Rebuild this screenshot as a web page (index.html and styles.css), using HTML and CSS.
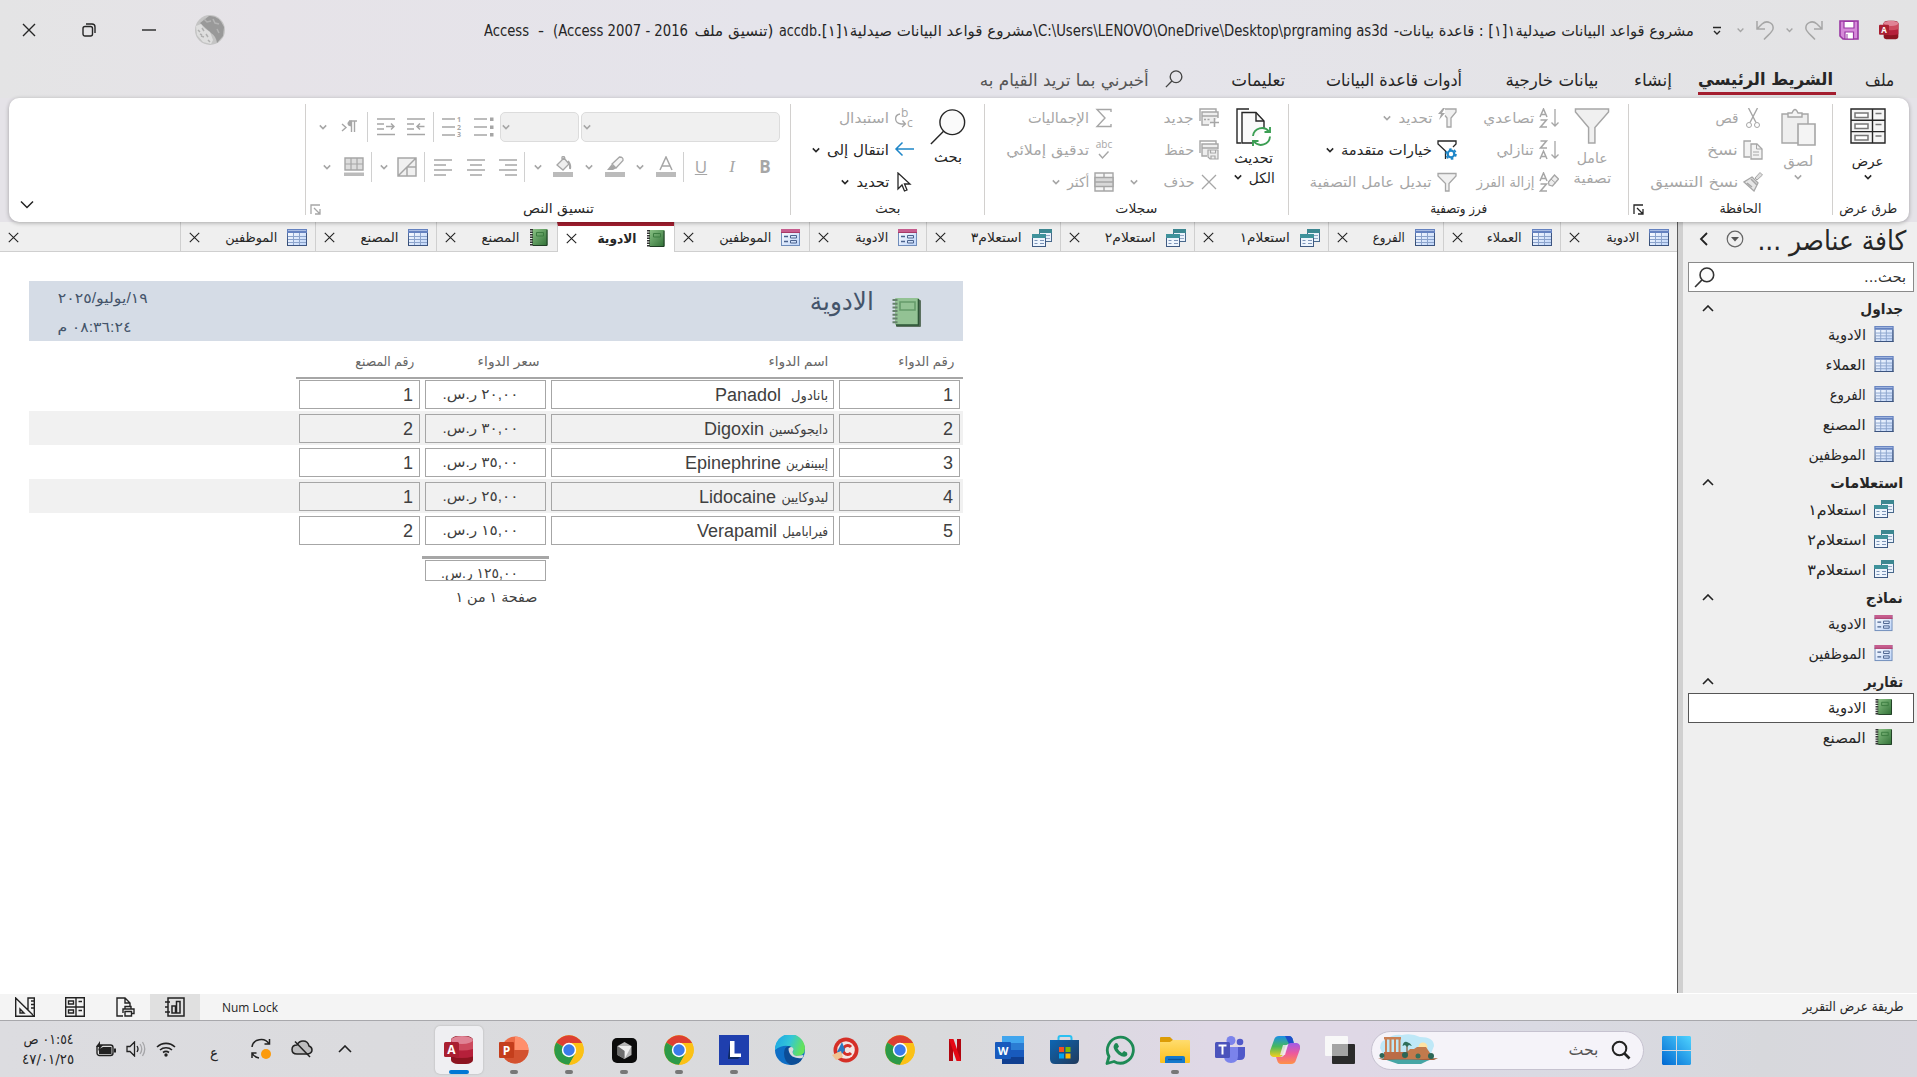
FILE: index.html
```html
<!DOCTYPE html>
<html lang="ar" dir="rtl">
<head>
<meta charset="utf-8">
<title>Access</title>
<link rel="stylesheet" href="styles.css">
</head>
<body>
<svg class="defs" width="0" height="0">
  <defs>
    <linearGradient id="gTable" x1="0" y1="0" x2="1" y2="1"><stop offset="0" stop-color="#fff"/><stop offset="1" stop-color="#bcd3f8"/></linearGradient>
    <linearGradient id="gFrame" x1="0" y1="0" x2="0" y2="1"><stop offset="0" stop-color="#5f7fc0"/><stop offset="1" stop-color="#2f4668"/></linearGradient>
    <linearGradient id="gBook" x1="0" y1="0" x2="1" y2="1"><stop offset="0" stop-color="#8cc487"/><stop offset="1" stop-color="#2f6f35"/></linearGradient>
    <linearGradient id="gWin" x1="0" y1="1" x2="1" y2="0"><stop offset="0" stop-color="#0067d1"/><stop offset="1" stop-color="#4fd3ff"/></linearGradient>
    <linearGradient id="gEdge" x1="0" y1="0" x2="1" y2="0.3"><stop offset="0" stop-color="#1ba3e6"/><stop offset=".55" stop-color="#33c6d8"/><stop offset="1" stop-color="#63e25c"/></linearGradient>
    <linearGradient id="gCopA" x1="0" y1="0" x2="0" y2="1"><stop offset="0" stop-color="#1b8fe8"/><stop offset=".5" stop-color="#48b85c"/><stop offset="1" stop-color="#f4cf1c"/></linearGradient>
    <linearGradient id="gCopB" x1="0" y1="0" x2="0" y2="1"><stop offset="0" stop-color="#a05be8"/><stop offset=".5" stop-color="#ee5a9b"/><stop offset="1" stop-color="#ff9146"/></linearGradient>
    <linearGradient id="gFolder" x1="0" y1="0" x2="0" y2="1"><stop offset="0" stop-color="#ffdc6e"/><stop offset="1" stop-color="#fcc01b"/></linearGradient>
    <linearGradient id="gStore" x1="0" y1="0" x2="1" y2="1"><stop offset="0" stop-color="#0c66b4"/><stop offset="1" stop-color="#213a5c"/></linearGradient>
  </defs>
  <symbol id="chev" viewBox="0 0 10 8"><path d="M1.8 2.4 5 5.6 8.2 2.4" fill="none" stroke="currentColor" stroke-width="1.5"/></symbol>
  <symbol id="x" viewBox="0 0 14 14"><path d="M1 1 13 13M13 1 1 13" fill="none" stroke="currentColor" stroke-width="1.4"/></symbol>
  <symbol id="launch" viewBox="0 0 11 11"><path d="M1 10V1H10M4 4l5.5 5.5M10 5v5H5" fill="none" stroke="currentColor" stroke-width="1.3"/></symbol>
  <symbol id="lens" viewBox="0 0 40 40"><circle cx="24.500" cy="15" r="13" fill="#fafafa" fill-opacity="var(--fo,1)" stroke="currentColor" stroke-width="var(--sw,1.500)"/><path d="M15.300 24.500 2 38" stroke="currentColor" stroke-width="var(--sw,1.500)"/></symbol>
  <symbol id="table" viewBox="0 0 20 17"><rect x=".5" y=".5" width="19" height="16" fill="url(#gTable)" stroke="url(#gFrame)"/><rect x="0" y="0" width="20" height="4" fill="#6582c0"/><path d="M1 1.500h18" stroke="#a9bce2"/><path d="M1 7.500h18M1 10.500h18M1 13.500h18M6.500 4v12M12.500 4v12" stroke="#8ba3cc" stroke-width="1"/><path d="M0 16.500h20M19.500 4v13" stroke="#3c5480"/></symbol>
  <symbol id="query" viewBox="0 0 20 18"><rect x="7.500" y=".5" width="12" height="12" fill="#eaf2fb" stroke="#49698c"/><path d="M7 0h13v4H7z" fill="#3c8791"/><path d="M9 6.500h9M9 9.500h9" stroke="#94a8c5"/><rect x=".5" y="5.500" width="13" height="12" fill="#eef5fd" stroke="#3f5a82"/><path d="M0 5h14v4H0z" fill="#3f929b"/><path d="M2.500 11.500h3M8 11.500h4M2.500 14.500h3M8 14.500h4" stroke="#7c94b8"/></symbol>
  <symbol id="form" viewBox="0 0 20 18"><rect x=".5" y=".5" width="18" height="16" fill="url(#gTable)" stroke="#6f8cba"/><path d="M0 0h19v4H0z" fill="#c65d8e"/><path d="M0 3.500h19" stroke="#a83a68"/><path d="M3 7.500h4M3 12.500h4" stroke="#4a628d" stroke-width="1.300"/><path d="M9.500 6.500h6v2.500h-6zM9.500 11.500h6v2.500h-6z" fill="none" stroke="#4a628d"/></symbol>
  <symbol id="book" viewBox="0 0 18 17"><rect x="2" y="0" width="15.500" height="16.500" fill="url(#gBook)"/><path d="M17 1v15.500H3" stroke="#1f3d24" fill="none"/><path d="M6.500 3.500h7v3.500h-7z" fill="none" stroke="#3c7c40"/><path d="M1.500 0v17" stroke="#333" stroke-width="3" stroke-dasharray="1.500 1"/></symbol>
  <symbol id="funnel" viewBox="0 0 20 20"><path d="M1 1.500h18V4l-7 7.500V19H8.500v-7.500L1 4z" fill="#f0f0f0" stroke="currentColor" stroke-width="1.300"/></symbol>
  <symbol id="access" viewBox="0 0 30 30"><rect x="7" y="1" width="22" height="28" rx="7" ry="4" fill="#8c1420"/><path d="M7 5h22v16.500q-11 3-22 0z" fill="#b5203a"/><path d="M7 5h22v9q-11 3-22 0z" fill="#cd4a5e"/><ellipse cx="18" cy="5" rx="11" ry="4" fill="#e08395"/><rect x="0" y="7" width="15" height="15" rx="1.500" fill="#a91f30"/><text x="7.500" y="19" text-anchor="middle" font-family="Open Sans" font-weight="700" font-size="12" fill="#fff">A</text></symbol>
  <symbol id="chrome" viewBox="-15 -15 30 30"><circle r="14.800" fill="#fbc116"/><path d="M0 0-12.800-7.400A14.800 14.800 0 0 1 12.800-7.400L13-7H0z" fill="#dd3f32"/><path d="M0 0-12.800-7.400A14.800 14.800 0 0 0 0 14.800L6.500 3.500z" fill="#2c9a48"/><path d="M0 0 6.500 3.500 0 14.800A14.800 14.800 0 0 0 13-7H0z" fill="#fbc116"/><circle r="7.200" fill="#fff"/><circle r="5.700" fill="#3a7bea"/></symbol>
</svg>

<header class="titlebar">
  <svg class="app" width="20" height="20"><use href="#access"/></svg>
  <svg class="save" width="20" height="20" viewBox="0 0 20 20"><path d="M1 1h18v18H4l-3-3z" fill="#d58ad9" stroke="#9a37a3" stroke-width="1.600"/><path d="M5 1.500h10V8H5zM6 12h8.500v7H6z" fill="#fff" stroke="#9a37a3" stroke-width="1.200"/><path d="M8 14v5" stroke="#9a37a3"/></svg>
  <svg class="redo dim" width="20" height="20" viewBox="0 0 20 20"><path d="M18 1v8h-8M18 9 13 4C8-.5 1 3 2 9c.5 3 5 6 9 10.500" fill="none" stroke="currentColor" stroke-width="1.500"/></svg>
  <svg class="c1 dim" width="9" height="8"><use href="#chev"/></svg>
  <svg class="undo dim" width="20" height="20" viewBox="0 0 20 20"><path d="M2 1v8h8M2 9 7 4C12-.5 19 3 18 9c-.5 3-5 6-9 10.500" fill="none" stroke="currentColor" stroke-width="1.500"/></svg>
  <svg class="c2 dim" width="9" height="8"><use href="#chev"/></svg>
  <svg class="c3" width="10" height="10" viewBox="0 0 10 10"><path d="M1 1.500h8M2 5l3 3 3-3" fill="none" stroke="currentColor" stroke-width="1.400"/></svg>
  <div class="title">
    <span class="t" data-w="300">مشروع قواعد البيانات صيدلية١[١] : قاعدة بيانات-</span>
    <span class="t gap6" dir="ltr" data-w="350">C:\Users\LENOVO\OneDrive\Desktop\prgraming as3d</span>
    <span class="t" data-w="221">\مشروع قواعد البيانات صيدلية١[١].</span>
    <span class="t" dir="ltr" data-w="38">accdb</span>
    <span class="t gap6" data-w="79">(تنسيق ملف</span>
    <span class="t gap6" dir="ltr" data-w="135">(Access 2007 - 2016</span>
    <span class="t gap9" data-w="6">-</span>
    <span class="t gap9" dir="ltr" data-w="45">Access</span>
  </div>
  <div class="window">
    <svg width="30" height="30" viewBox="0 0 30 30"><circle cx="15" cy="15" r="15" fill="#c4c4c4"/><path d="M5 8 14 1q10-1 15 11l-1 9-6 7q-1-7-6-10z" fill="#999"/><path d="m1 11 5-2 3 4 6 4 3 8-2 4-8-2-6-7z" fill="#dedede"/><path d="m3 15 2 2m2-4 2 3m-3 5 3 1m2-3 2 3m0 3 2 2M5 19l2 1" stroke="#b0b0b0" stroke-width="1.500"/><path d="m9 4 3 3 4-1M18 4l2 4 4 1M22 14l2 4" stroke="#b4b4b4" fill="none" stroke-width="1.500"/></svg>
    <svg width="14" height="14" viewBox="0 0 14 14"><path d="M0 7h14" stroke="currentColor" stroke-width="1.400"/></svg>
    <svg width="14" height="14" viewBox="0 0 14 14"><rect x="1" y="3.500" width="9.500" height="9.500" rx="2" fill="none" stroke="currentColor" stroke-width="1.400"/><path d="M4 1h6q3 0 3 3v6" fill="none" stroke="currentColor" stroke-width="1.400"/></svg>
    <svg width="14" height="14"><use href="#x"/></svg>
  </div>
</header>

<nav class="menu">
  <span class="t" data-w="29">ملف</span>
  <span class="on"><span class="t" data-w="135">الشريط الرئيسي</span></span>
  <span class="t" data-w="38">إنشاء</span>
  <span class="t m36" data-w="93">بيانات خارجية</span>
  <span class="t m43" data-w="136">أدوات قاعدة البيانات</span>
  <span class="t m41" data-w="54">تعليمات</span>
  <svg class="tell" width="18" height="20"><use href="#lens"/></svg>
  <span class="t say" data-w="169">أخبرني بما تريد القيام به</span>
</nav>

<section class="ribbon">
  <div class="group g1">
    <div class="body">
      <div class="big">
        <svg width="36" height="36" viewBox="0 0 36 36"><path d="M1 1h34v34H1zM1 12.300h34M1 23.600h34M22.500 1v34" fill="#f5f5f5" stroke="currentColor" stroke-width="1.400"/><path d="M5 5h13v4.500H5zM5 16h13v4.500H5zM5 27.500h13v4.500H5z" fill="#fff" stroke="#777" stroke-width="1.500"/><path d="M25.500 5.500h6M25.500 16.500h6M25.500 28h6" stroke="#777" stroke-width="1.500"/></svg>
        <span class="t" data-w="32">عرض</span><svg class="below" width="10" height="8"><use href="#chev"/></svg>
      </div>
    </div>
    <footer><span class="t" data-w="58">طرق عرض</span></footer>
  </div>
  <div class="group g2">
    <div class="body">
      <div class="big dim">
        <svg width="36" height="38" viewBox="0 0 36 38"><path d="M2 6h26v29H2z" fill="#eee" stroke="currentColor" stroke-width="1.400"/><path d="M8 9V5h4q3-7 6 0h4v4z" fill="#f4f4f4" stroke="currentColor" stroke-width="1.400"/><path d="M18 16h17v21H18z" fill="#f4f4f4" stroke="currentColor" stroke-width="1.600"/></svg>
        <span class="t" data-w="30">لصق</span><svg class="below" width="10" height="8"><use href="#chev"/></svg>
      </div>
      <div class="col dim">
        <div class="cmd"><svg width="20" height="20" viewBox="0 0 20 20"><path d="M5.500 0 13 14.500M14.500 0 7 14.500" fill="none" stroke="currentColor" stroke-width="1.400"/><circle cx="6" cy="17" r="2.500" fill="none" stroke="currentColor"/><circle cx="14" cy="17" r="2.500" fill="none" stroke="currentColor"/></svg><span class="t" data-w="23">قص</span></div>
        <div class="cmd"><svg width="20" height="20" viewBox="0 0 20 20"><path d="M7 17H1V1h7M8 4h6l5 5v10H8z" fill="#f2f2f2" stroke="currentColor" stroke-width="1.300"/><path d="M13.500 4v5H19M10 12h6M10 15h6" fill="none" stroke="currentColor"/></svg><span class="t" data-w="31">نسخ</span></div>
        <div class="cmd"><svg width="20" height="20" viewBox="0 0 20 20"><path d="m12 6 5-5.500 2.500 2.500L14 8z" fill="#ddd" stroke="currentColor"/><path d="m9 5 6 6-4 8L1 10z" fill="#e6e6e6" stroke="currentColor" stroke-width="1.300"/><path d="m8 7 6 6M4 11l5 4" stroke="currentColor" stroke-width="1.600"/></svg><span class="t" data-w="88">نسخ التنسيق</span></div>
      </div>
    </div>
    <footer><span class="t" data-w="42">الحافظة</span><svg class="lau" width="11" height="11"><use href="#launch"/></svg></footer>
  </div>
  <div class="group g3">
    <div class="body">
      <div class="big dim two">
        <svg width="36" height="37" viewBox="0 0 36 37"><path d="M1 1h34v3L21 20v16h-6.500V20L1 4z" fill="#f0f0f0" stroke="currentColor" stroke-width="1.500"/></svg>
        <span class="t" data-w="31">عامل</span><span class="t" data-w="38">تصفية</span>
      </div>
      <div class="col sort dim">
        <div class="cmd"><svg width="20" height="20" viewBox="0 0 20 20"><path d="M16 1v17M12.500 14.500 16 18l3.500-3.500" fill="none" stroke="currentColor" stroke-width="1.300"/><path d="M1 9 4.500 1 8 9M2.500 6.500h4M1.500 12h6l-6 7h6.500" fill="none" stroke="currentColor" stroke-width="1.500"/></svg><span class="t" data-w="51">تصاعدي</span></div>
        <div class="cmd"><svg width="20" height="20" viewBox="0 0 20 20"><path d="M16 1v17M12.500 14.500 16 18l3.500-3.500" fill="none" stroke="currentColor" stroke-width="1.300"/><path d="M1 19 4.500 11 8 19M2.500 16.500h4M1.500 1h6l-6 7h6.500" fill="none" stroke="currentColor" stroke-width="1.500"/></svg><span class="t" data-w="37">تنازلي</span></div>
        <div class="cmd"><svg width="20" height="20" viewBox="0 0 20 20"><path d="M1 9 4.500 1 8 9M2.500 6.500h4M1.500 12h6l-6 7h6.500" fill="none" stroke="currentColor" stroke-width="1.500"/><path d="m9.500 10 6-7 4 4-6 7-3.500-1z" fill="#eee" stroke="currentColor" stroke-width="1.300"/><path d="m12 7 4.500 4" stroke="currentColor"/></svg><span class="t" data-w="58">إزالة الفرز</span></div>
      </div>
      <div class="col">
        <div class="cmd dim"><svg width="20" height="20" viewBox="0 0 20 20"><path d="M8 1h11v3l-5 6v9h-4v-9L8 7.500" fill="#f0f0f0" stroke="currentColor" stroke-width="1.300"/><path d="M6 0 1 6h3l-2 6 6-7H5l3-5z" fill="currentColor"/></svg><span class="t" data-w="34">تحديد</span><svg class="c" width="10" height="8"><use href="#chev"/></svg></div>
        <div class="cmd"><svg width="20" height="20" viewBox="0 0 20 20"><path d="M8.500 19v-8L1 4V1h18v3l-3 3" fill="none" stroke="currentColor" stroke-width="1.300"/><circle cx="14" cy="14" r="3.300" fill="none" stroke="#1e86c8" stroke-width="2.200"/><circle cx="14" cy="14" r="4.900" fill="none" stroke="#1e86c8" stroke-width="1.800" stroke-dasharray="2.560 2.560"/></svg><span class="t" data-w="91">خيارات متقدمة</span><svg class="c" width="10" height="8"><use href="#chev"/></svg></div>
        <div class="cmd dim"><svg width="20" height="20"><use href="#funnel"/></svg><span class="t" data-w="122">تبديل عامل التصفية</span></div>
      </div>
    </div>
    <footer><span class="t" data-w="57">فرز وتصفية</span></footer>
  </div>
  <div class="group g4">
    <div class="body">
      <div class="big two">
        <svg width="36" height="38" viewBox="0 0 36 38"><path d="M5 35H1V1h12" fill="none" stroke="currentColor" stroke-width="1.400"/><path d="M17 35H6V4.500h14l8 8.500v7" fill="#fafafa" stroke="currentColor" stroke-width="1.400"/><path d="M20 4.500V13h8" fill="none" stroke="currentColor" stroke-width="1.400"/><path d="M17 28a9 9 0 0 1 16-4.500M34 28.500a9 9 0 0 1-16 5" fill="none" stroke="#3c9f54" stroke-width="1.900"/><path d="M34 19v5h-5.500M17 38v-5h5.500" fill="none" stroke="#3c9f54" stroke-width="1.900"/></svg>
        <span class="t" data-w="39">تحديث</span><span class="pair"><span class="t" data-w="26">الكل</span><svg class="c" width="10" height="8"><use href="#chev"/></svg></span>
      </div>
      <div class="col rec dim">
        <div class="cmd"><svg width="20" height="20" viewBox="0 0 20 20"><path d="M1 13V1h16v3" fill="none" stroke="currentColor" stroke-width="1.400"/><path d="M10 17H3V4h16v6M3 8h16" fill="#eee" stroke="currentColor" stroke-width="1.400"/><path d="M5 11.500h2M8.500 11.500h2M15.500 10v9M11 14.500h9" stroke="currentColor" stroke-width="1.600"/></svg><span class="t" data-w="30">جديد</span></div>
        <div class="cmd"><svg width="20" height="20" viewBox="0 0 20 20"><path d="M1 13V1h16v3" fill="none" stroke="currentColor" stroke-width="1.400"/><path d="M8 16H3V4h16v5M3 8h16" fill="#eee" stroke="currentColor" stroke-width="1.400"/><path d="M9 10h10v9h-8l-2-2zM11.500 10v3h5v-3M12 19v-3h4v3" fill="#eee" stroke="currentColor" stroke-width="1.200"/></svg><span class="t" data-w="30">حفظ</span></div>
        <div class="cmd"><svg width="20" height="20" viewBox="0 0 20 20"><path d="m3 3 14 14M17 3 3 17" stroke="currentColor" stroke-width="1.300"/></svg><span class="t" data-w="31">حذف</span><svg class="far" width="10" height="8"><use href="#chev"/></svg></div>
      </div>
      <div class="col dim">
        <div class="cmd"><svg width="20" height="20" viewBox="0 0 20 20"><path d="M17 4V1.500H3L11 10l-8 8.500h14V16" fill="none" stroke="currentColor" stroke-width="1.400"/></svg><span class="t" data-w="61">الإجماليات</span></div>
        <div class="cmd"><svg width="20" height="20" viewBox="0 0 20 20"><text x="10" y="8" text-anchor="middle" font-family="Open Sans" font-size="10" fill="currentColor">abc</text><path d="m5 14 3.500 4 6-6.500" fill="none" stroke="currentColor" stroke-width="1.400"/></svg><span class="t" data-w="83">تدقيق إملائي</span></div>
        <div class="cmd"><svg width="20" height="20" viewBox="0 0 20 20"><path d="M1 1h18v18H1z" fill="#f6f6f6" stroke="currentColor" stroke-width="1.400"/><path d="M1 5.500h18v9H1z" fill="#d8d8d8" stroke="currentColor" stroke-width="1.400"/><path d="M1 10h18M10 1v4.500M10 14.500V19" stroke="currentColor" stroke-width="1.400"/></svg><span class="t" data-w="22">أكثر</span><svg class="c" width="10" height="8"><use href="#chev"/></svg></div>
      </div>
    </div>
    <footer><span class="t" data-w="42">سجلات</span></footer>
  </div>
  <div class="group g5">
    <div class="body">
      <div class="big">
        <svg width="38" height="38"><use href="#lens"/></svg>
        <span class="t" data-w="28">بحث</span>
      </div>
      <div class="col">
        <div class="cmd dim"><svg width="20" height="20" viewBox="0 0 20 20"><text x="7" y="9" font-family="Open Sans" font-size="12" fill="currentColor">b</text><text x="13" y="19" font-family="Open Sans" font-size="12" fill="currentColor">c</text><path d="M6 6c-6 1-6 9 1 10h4M8.500 12.500 11.500 16 8 19" fill="none" stroke="currentColor" stroke-width="1.300"/></svg><span class="t" data-w="50">استبدال</span></div>
        <div class="cmd"><svg width="20" height="20" viewBox="0 0 20 20"><path d="M20 9H2M8.500 2.500 2 9l6.500 6.500" fill="none" stroke="#1e86c8" stroke-width="1.500"/></svg><span class="t" data-w="62">انتقال إلى</span><svg class="c" width="10" height="8"><use href="#chev"/></svg></div>
        <div class="cmd"><svg width="20" height="20" viewBox="0 0 20 20"><path d="M4 1v16l4-4 2.500 6 2.500-1-2.500-6H16z" fill="#fff" stroke="currentColor" stroke-width="1.300"/></svg><span class="t" data-w="33">تحديد</span><svg class="c" width="10" height="8"><use href="#chev"/></svg></div>
      </div>
    </div>
    <footer><span class="t" data-w="25">بحث</span></footer>
  </div>
  <div class="group g6">
    <div class="body dim">
      <div class="line one">
        <span class="combo"><svg width="10" height="8"><use href="#chev"/></svg></span>
        <span class="combo"><svg width="10" height="8"><use href="#chev"/></svg></span>
        <svg width="20" height="20" viewBox="0 0 20 20"><path d="M0 2h13M0 10h13M0 18h13" stroke="currentColor" stroke-width="1.600"/><path d="M16 .5h3.500V4H16zM16 8.500h3.500V12H16zM16 16h3.500v3.500H16z" fill="currentColor"/></svg>
        <svg width="20" height="20" viewBox="0 0 20 20"><path d="M0 2h13M0 10h13M0 18h13" stroke="currentColor" stroke-width="1.600"/><g font-family="Open Sans" font-weight="700" font-size="7" fill="currentColor"><text x="15" y="5">1</text><text x="15" y="12.500">2</text><text x="15" y="20">3</text></g></svg>
        <i class="sep"></i>
        <svg width="18" height="20" viewBox="0 0 18 20"><path d="M0 2h18M0 7h7M0 12h7M0 17.500h18M17.500 9.500H10M13 6.500l-3 3 3 3" fill="none" stroke="currentColor" stroke-width="1.500"/></svg>
        <svg width="18" height="20" viewBox="0 0 18 20"><path d="M0 2h18M0 7h7M0 12h7M0 17.500h18M9 9.500h8M14 6.500l3 3-3 3" fill="none" stroke="currentColor" stroke-width="1.500"/></svg>
        <i class="sep"></i>
        <svg width="16" height="14" viewBox="0 0 16 14"><path d="m1 4 4 3.500L1 11M10.500 1v11M13.500 1v11M8 1h8" fill="none" stroke="currentColor" stroke-width="1.400"/><path d="M11 .5v6Q6.500 6.500 6.500 3.500T11 .5z" fill="currentColor"/></svg>
        <svg width="10" height="8"><use href="#chev"/></svg>
      </div>
      <div class="line two">
        <b class="let">B</b><em class="let">I</em><u class="let">U</u><i class="sep"></i>
        <svg width="20" height="22" viewBox="0 0 20 22"><path d="M4 14 10 1l6 13M6 10h8" fill="none" stroke="currentColor" stroke-width="1.500"/><path d="M0 16h20v5H0z" fill="#bbb"/></svg>
        <svg width="10" height="8"><use href="#chev"/></svg>
        <svg width="20" height="22" viewBox="0 0 20 22"><path d="m7 8 7.500-7q4 0 3.500 3.500L11 12z" fill="#f6f6f6" stroke="currentColor" stroke-width="1.300"/><path d="m6.500 8.500-4.500 5.500h6l3.500-2z" fill="currentColor"/><path d="M0 16h20v5H0z" fill="#bbb"/></svg>
        <svg width="10" height="8"><use href="#chev"/></svg>
        <svg width="20" height="22" viewBox="0 0 20 22"><path d="m4 9 7-7 5 6-6 6zM9 5V1q3-2 3 3" fill="#eee" stroke="currentColor" stroke-width="1.300"/><path d="M15 5q3 4 2 8" fill="none" stroke="currentColor" stroke-width="2"/><path d="M0 16h20v5H0z" fill="#bbb"/></svg>
        <svg width="10" height="8"><use href="#chev"/></svg>
        <i class="sep"></i>
        <svg width="18" height="18" viewBox="0 0 18 18"><path d="M0 2h18M6 7h12M0 12h18M6 17h12" stroke="currentColor" stroke-width="1.500"/></svg>
        <svg width="18" height="18" viewBox="0 0 18 18"><path d="M0 2h18M3 7h12M0 12h18M3 17h12" stroke="currentColor" stroke-width="1.500"/></svg>
        <svg width="18" height="18" viewBox="0 0 18 18"><path d="M0 2h18M0 7h12M0 12h18M0 17h12" stroke="currentColor" stroke-width="1.500"/></svg>
        <i class="sep"></i>
        <svg width="20" height="20" viewBox="0 0 20 20"><path d="M1 1h18v18H1zM1 19 19 1M10 10v9M10 10h9" fill="#f0f0f0" stroke="currentColor" stroke-width="1.500"/></svg>
        <svg width="10" height="8"><use href="#chev"/></svg>
        <i class="sep"></i>
        <svg width="20" height="20" viewBox="0 0 20 20"><path d="M1 1h18v12H1z" fill="#ddd" stroke="currentColor" stroke-width="1.400"/><path d="M1 7h18M7 1v12M13 1v12" stroke="currentColor" stroke-width="1.200"/><path d="M0 15.500h20V19H0z" fill="#bbb"/></svg>
        <svg width="10" height="8"><use href="#chev"/></svg>
      </div>
    </div>
    <footer><span class="t" data-w="71">تنسيق النص</span><svg class="lau dim" width="11" height="11"><use href="#launch"/></svg></footer>
  </div>
  <svg class="collapse" width="14" height="9" viewBox="0 0 14 9"><path d="m1 1.500 6 6 6-6" fill="none" stroke="currentColor" stroke-width="1.500"/></svg>
</section>

<main class="work">
  <section class="docs">
    <div class="tabs">
      <div class="tab w117"><svg width="20" height="17"><use href="#table"/></svg><span class="t" data-w="33">الادوية</span><svg class="x" width="11" height="11"><use href="#x"/></svg></div>
      <div class="tab w117"><svg width="20" height="17"><use href="#table"/></svg><span class="t" data-w="35">العملاء</span><svg class="x" width="11" height="11"><use href="#x"/></svg></div>
      <div class="tab w115"><svg width="20" height="17"><use href="#table"/></svg><span class="t" data-w="32">الفروع</span><svg class="x" width="11" height="11"><use href="#x"/></svg></div>
      <div class="tab w134"><svg width="20" height="18"><use href="#query"/></svg><span class="t" data-w="50">استعلام١</span><svg class="x" width="11" height="11"><use href="#x"/></svg></div>
      <div class="tab w134"><svg width="20" height="18"><use href="#query"/></svg><span class="t" data-w="51">استعلام٢</span><svg class="x" width="11" height="11"><use href="#x"/></svg></div>
      <div class="tab w134"><svg width="20" height="18"><use href="#query"/></svg><span class="t" data-w="51">استعلام٣</span><svg class="x" width="11" height="11"><use href="#x"/></svg></div>
      <div class="tab w117"><svg width="20" height="18"><use href="#form"/></svg><span class="t" data-w="33">الادوية</span><svg class="x" width="11" height="11"><use href="#x"/></svg></div>
      <div class="tab w135"><svg width="20" height="18"><use href="#form"/></svg><span class="t" data-w="52">الموظفين</span><svg class="x" width="11" height="11"><use href="#x"/></svg></div>
      <div class="tab w117 active"><svg width="20" height="17"><use href="#book"/></svg><span class="t" data-w="39">الادوية</span><svg class="x" width="11" height="11"><use href="#x"/></svg></div>
      <div class="tab w121"><svg width="20" height="17"><use href="#book"/></svg><span class="t" data-w="38">المصنع</span><svg class="x" width="11" height="11"><use href="#x"/></svg></div>
      <div class="tab w121"><svg width="20" height="17"><use href="#table"/></svg><span class="t" data-w="38">المصنع</span><svg class="x" width="11" height="11"><use href="#x"/></svg></div>
      <div class="tab w135"><svg width="20" height="17"><use href="#table"/></svg><span class="t" data-w="52">الموظفين</span><svg class="x" width="11" height="11"><use href="#x"/></svg></div>
      <div class="tab rest"><svg class="x" width="11" height="11"><use href="#x"/></svg></div>
    </div>
    <article class="report">
      <header class="band">
        <svg width="30" height="30" viewBox="0 0 30 30"><rect x="4" y="3" width="25" height="27" rx="1" fill="#5c7160"/><rect x="3" y="1" width="24" height="27" rx="1" fill="#93c294"/><path d="M26.500 2v26H4" fill="none" stroke="#2d5536" stroke-width="1.600"/><path d="M8 5h15v8H8z" fill="none" stroke="#659b69" stroke-width="1.600"/><path d="M3 2v26" stroke="#66806c" stroke-width="5" stroke-dasharray="2 1.700"/></svg>
        <h1><span class="t" data-w="64">الادوية</span></h1>
        <div class="stamp">
          <span class="t" data-w="90">١٩/يوليو/٢٠٢٥</span>
          <span class="t" data-w="74">٠٨:٣٦:٢٤ م</span>
        </div>
      </header>
      <div class="row head">
        <span><span class="t" data-w="56">رقم الدواء</span></span><span><span class="t" data-w="60">اسم الدواء</span></span><span><span class="t" data-w="62">سعر الدواء</span></span><span><span class="t" data-w="59">رقم المصنع</span></span>
      </div>
      <div class="rule"></div>
      <div class="row data"><span>1</span><span class="name"><span class="t" data-w="37">بانادول</span><bdi class="wide">Panadol</bdi></span><span class="cash"><span class="t" data-w="76">٢٠,٠٠ ر.س.</span></span><span>1</span></div>
      <div class="row data alt"><span>2</span><span class="name"><span class="t" data-w="59">دايجوكسين</span><bdi>Digoxin</bdi></span><span class="cash"><span class="t" data-w="76">٣٠,٠٠ ر.س.</span></span><span>2</span></div>
      <div class="row data"><span>3</span><span class="name"><span class="t" data-w="42">إيبينفرين</span><bdi>Epinephrine</bdi></span><span class="cash"><span class="t" data-w="76">٣٥,٠٠ ر.س.</span></span><span>1</span></div>
      <div class="row data alt"><span>4</span><span class="name"><span class="t" data-w="47">ليدوكايين</span><bdi>Lidocaine</bdi></span><span class="cash"><span class="t" data-w="76">٢٥,٠٠ ر.س.</span></span><span>1</span></div>
      <div class="row data"><span>5</span><span class="name"><span class="t" data-w="46">فيراباميل</span><bdi>Verapamil</bdi></span><span class="cash"><span class="t" data-w="76">١٥,٠٠ ر.س.</span></span><span>2</span></div>
      <div class="sum"><div class="total cash"><span class="t" data-w="77">١٢٥,٠٠ ر.س.</span></div><div class="page"><span class="t" data-w="82">صفحة ١ من ١</span></div></div>
    </article>
  </section>
  <aside class="nav">
    <div class="top"><span class="t" data-w="149">كافة عناصر ...</span>
      <svg class="circ" width="18" height="18" viewBox="0 0 18 18"><circle cx="9" cy="9" r="7.800" fill="none" stroke="#666" stroke-width="1.200"/><path d="M5 7h8l-4 4.500z" fill="#555"/></svg>
      <svg class="fold" width="9" height="14" viewBox="0 0 9 14"><path d="M8 1 2 7l6 6" fill="none" stroke="#222" stroke-width="1.800"/></svg>
    </div>
    <div class="find"><span class="t" data-w="42">بحث...</span><svg width="21" height="21"><use href="#lens"/></svg></div>
    <div class="cat first"><span class="t" data-w="43">جداول</span><svg width="12" height="7" viewBox="0 0 12 7"><path d="m1 6 5-5 5 5" fill="none" stroke="#222" stroke-width="1.600"/></svg></div>
    <div class="obj"><svg width="20" height="16"><use href="#table"/></svg><span class="t" data-w="38">الادوية</span></div>
    <div class="obj"><svg width="20" height="16"><use href="#table"/></svg><span class="t" data-w="40">العملاء</span></div>
    <div class="obj"><svg width="20" height="16"><use href="#table"/></svg><span class="t" data-w="36">الفروع</span></div>
    <div class="obj"><svg width="20" height="16"><use href="#table"/></svg><span class="t" data-w="43">المصنع</span></div>
    <div class="obj"><svg width="20" height="16"><use href="#table"/></svg><span class="t" data-w="57">الموظفين</span></div>
    <div class="cat second"><span class="t" data-w="73">استعلامات</span><svg width="12" height="7" viewBox="0 0 12 7"><path d="m1 6 5-5 5 5" fill="none" stroke="#222" stroke-width="1.600"/></svg></div>
    <div class="obj"><svg width="20" height="18"><use href="#query"/></svg><span class="t" data-w="58">استعلام١</span></div>
    <div class="obj"><svg width="20" height="18"><use href="#query"/></svg><span class="t" data-w="59">استعلام٢</span></div>
    <div class="obj"><svg width="20" height="18"><use href="#query"/></svg><span class="t" data-w="59">استعلام٣</span></div>
    <div class="cat"><span class="t" data-w="37">نماذج</span><svg width="12" height="7" viewBox="0 0 12 7"><path d="m1 6 5-5 5 5" fill="none" stroke="#222" stroke-width="1.600"/></svg></div>
    <div class="obj"><svg width="20" height="17"><use href="#form"/></svg><span class="t" data-w="38">الادوية</span></div>
    <div class="obj"><svg width="20" height="17"><use href="#form"/></svg><span class="t" data-w="57">الموظفين</span></div>
    <div class="cat"><span class="t" data-w="39">تقارير</span><svg width="12" height="7" viewBox="0 0 12 7"><path d="m1 6 5-5 5 5" fill="none" stroke="#222" stroke-width="1.600"/></svg></div>
    <div class="obj sel"><svg width="20" height="16"><use href="#book"/></svg><span class="t" data-w="38">الادوية</span></div>
    <div class="obj"><svg width="20" height="16"><use href="#book"/></svg><span class="t" data-w="43">المصنع</span></div>
  </aside>
</main>

<footer class="status">
  <span class="t" data-w="101">طريقة عرض التقرير</span>
  <span class="t num" dir="ltr" data-w="56">Num Lock</span>
  <span class="view on"><svg width="20" height="20" viewBox="0 0 20 20"><path d="M3 1h16v18H3zM0 5h5M0 10h3M0 15h5M7 9h3.500v7H7zM11.500 4.500H15V16h-3.500z" fill="none" stroke="currentColor" stroke-width="1.500"/></svg></span>
  <span class="view"><svg width="20" height="20" viewBox="0 0 20 20"><path d="M8 19H2V1h8l5 5v3M10 1v5h5" fill="none" stroke="currentColor" stroke-width="1.400"/><path d="M10 12V9.500h6V12M8 16v-4h11v4.500h-2M10 14.500h6.500V19H10z" fill="none" stroke="currentColor" stroke-width="1.400"/></svg></span>
  <span class="view"><svg width="20" height="20" viewBox="0 0 20 20"><path d="M.7.700h18.600v18.600H.7zM.7 10h18.600M11 .7v18.600M3.500 4h5v3h-5zM3.500 13h5v3h-5zM13.500 4.500h3.500M13.500 13.500h3.500" fill="none" stroke="currentColor" stroke-width="1.400"/></svg></span>
  <span class="view"><svg width="20" height="20" viewBox="0 0 20 20"><path d="M.7 1v18.300h18.600zM5 12v4h4zM13 13V1h6.300v18M16 4h3M16 7.500h3M16 11h3" fill="none" stroke="currentColor" stroke-width="1.400"/></svg></span>
</footer>

<footer class="taskbar">
  <svg class="start" width="29" height="29" viewBox="0 0 29 29"><path d="M1 0h13v14H0V1zM15 0h13l1 1v13H15zM0 15h14v14H1l-1-1zM15 15h14v13l-1 1H15z" fill="url(#gWin)"/></svg>
  <div class="pill">
    <svg width="20" height="20" viewBox="0 0 20 20"><circle cx="8.500" cy="8.500" r="6.800" fill="none" stroke="#222" stroke-width="2"/><path d="m13.500 13.500 5 5" stroke="#222" stroke-width="2.600"/></svg>
    <span class="t" data-w="30">بحث</span>
    <svg class="pic" width="60" height="32" viewBox="0 0 60 32"><path d="M2 14q0-8 8-9 4-5 14-4 10-2 18 2 14 0 14 9l-4 10H6z" fill="#bfe8f7"/><circle cx="45" cy="13" r="4.500" fill="#ffe3a3"/><path d="M3 24h54l-8 3-6 3H20z" fill="#46a5a4"/><path d="M6 18h25v7H6z" fill="#bb6c46"/><path d="M28 19l4-4h4l3-2h9l4 6v6H28z" fill="#c27a4c"/><path d="M6 3h17v2.500H6zM7 5h2v13H7zM11.500 5h2v13h-2zM16 5h2v13h-2zM20.500 5h2v13h-2z" fill="#c98053"/><path d="M0 24q20 3 60 0l-4 2H5z" fill="#a55f3c"/><path d="M29 11v9" stroke="#7a5632" stroke-width="1.200"/><path d="M24.500 12q1-5 4.500-4t5 4l-3-1-2 2-2-2z" fill="#2f6f5a"/><circle cx="27" cy="21" r="3" fill="#2c6656"/><circle cx="40" cy="22" r="2.500" fill="#35705a"/><circle cx="53" cy="22" r="3" fill="#2c6656"/><circle cx="4" cy="21.500" r="2.500" fill="#2c6656"/></svg>
  </div>
  <div class="apps">
    <div><svg width="30" height="28" viewBox="0 0 30 28"><rect x="7" y="8" width="23" height="20" rx="1" fill="#2b2b2b"/><rect x="0" y="0" width="23" height="20" rx="1" fill="#f8f8f8"/><path d="M7 8h16v12H7z" fill="#a4a4a4"/></svg></div>
    <div><svg width="30" height="28" viewBox="0 0 30 28"><path d="M9 0h10q3 0 4 4l1 4h-5q-3 0-4 4l-2 6q-1 3-4 3H3q-4-1-3-6L4 4Q5 0 9 0z" fill="url(#gCopA)"/><path d="M15 0h4q3 0 4 4l1 4h-5z" fill="#1e4fc9"/><path d="M21 28H11q-3 0-4-4l-1-3h5q3 0 4-4l2-6q1-4 4-4h6q4 1 3 6l-4 11q-1 4-5 4z" fill="url(#gCopB)"/><path d="M13 9h5l-3 10h-5z" fill="#f6ecf6" opacity=".8"/></svg></div>
    <div><svg width="30" height="28" viewBox="0 0 30 28"><circle cx="25" cy="6" r="3.300" fill="#5059c9"/><circle cx="16" cy="4.500" r="4.500" fill="#7b83eb"/><path d="M20 11h10v8q0 5-5 5h-4z" fill="#5059c9"/><path d="M9 11h14v9q0 7-7 7t-7-7z" fill="#7b83eb"/><rect y="6" width="15" height="16" rx="1.500" fill="#4b53bc"/><path d="M3.500 9.500h8M7.500 9.500v9" stroke="#fff" stroke-width="2"/></svg></div>
    <div class="run"><svg width="30" height="28" viewBox="0 0 30 28"><path d="M0 2q0-1 1-1h9l3 3-2 4H0z" fill="#dc9c06"/><path d="M0 6h10l3-2h16q1 0 1 1v21q0 1-1 1H1q-1 0-1-1z" fill="url(#gFolder)"/><path d="M5 27v-5q0-2 2-2h16q2 0 2 2v5z" fill="#1479cc"/><path d="M8 23.500h14" stroke="#0b5499" stroke-width="1.300"/></svg></div>
    <div><svg width="30" height="30" viewBox="0 0 30 30"><path d="M2 28.500 4 21.500A13 13 0 1 1 9 26.500z" fill="none" stroke="#1d8a55" stroke-width="2.800" stroke-linejoin="round"/><path d="M10 8.500q1-1 2.500 0l1.500 3-1.500 2q1.500 3 4.500 4.500l2-2 3 1.500q1 2-.5 3.500-3 2-8-1.500-4.500-4-5-7.500 0-2 1.500-3.500z" fill="#1d8a55"/></svg></div>
    <div><svg width="30" height="30" viewBox="0 0 30 30"><path d="M8.500 7V3q0-2 2-2h9q2 0 2 2v4" fill="none" stroke="#2ac0f2" stroke-width="2"/><path d="M0 5h29v19q0 5-5 5H5q-5 0-5-5z" fill="url(#gStore)"/><path d="M9 12h5v5H9z" fill="#f25022"/><path d="M15.500 12h5v5h-5z" fill="#7fba00"/><path d="M9 18.500h5v5H9z" fill="#00a4ef"/><path d="M15.500 18.500h5v5h-5z" fill="#ffb900"/></svg></div>
    <div><svg width="30" height="28" viewBox="0 0 30 28"><path d="M7 0h22v7H7z" fill="#41a5ee"/><path d="M7 7h22v7H7z" fill="#2b7cd3"/><path d="M7 14h22v7H7z" fill="#185abd"/><path d="M7 21h22v7H7z" fill="#103f91"/><rect y="6" width="16" height="17" rx="1" fill="#185abd"/><text x="8" y="18.500" text-anchor="middle" font-family="Open Sans" font-weight="700" font-size="11" fill="#fff">W</text></svg></div>
    <div><svg width="14" height="22" viewBox="0 0 14 22"><path d="M1 0h4v22H1zM9 0h4v22H9z" fill="#b1060f"/><path d="M1 0h4.500L13 22H8.500z" fill="#e50914"/></svg></div>
    <div><svg width="30" height="30"><use href="#chrome"/></svg></div>
    <div><svg width="30" height="28" viewBox="0 0 30 28"><circle cx="16" cy="14" r="12.500" fill="#d52f27"/><circle cx="16" cy="14" r="8.800" fill="#f3e6e4"/><path d="M21 11a4.500 4.500 0 1 0 0 6" fill="none" stroke="#d52f27" stroke-width="3"/><path d="m12 6 3 8-3 4-5-2z" fill="#2b79c2"/><path d="m2 19 9-4 2 6-7 3z" fill="#f0c391"/></svg></div>
    <div><svg width="30" height="30" viewBox="0 0 30 30"><circle cx="15" cy="15" r="15" fill="#0f6fc6"/><path d="M0 15A15 15 0 0 1 30 13q0 8-8 8-5 0-4-4 1-5-5-6T0 15z" fill="url(#gEdge)"/><path d="M9 18q0-6 5-7 4 1 4 4-3 7 4 8 4 1 6-1-3 8-12 8-7-3-7-12z" fill="#0c4d96"/><path d="M13.500 13.500q3.500-3 5 .5-2.500 6 3 7l7-1-1 3q-5 1-10-1.500-4-3-4-8z" fill="#d9dadd"/></svg></div>
    <div class="run"><svg width="30" height="30" viewBox="0 0 30 30"><path d="M0 0h30v30H0z" fill="#1f3fae"/><path d="M9 22 11 8v12l10 2-2 2H9z" fill="#0e2a63"/><path d="M11 6h4.500v12.500H22V22H11z" fill="#fff"/></svg></div>
    <div class="run"><svg width="30" height="30"><use href="#chrome"/></svg></div>
    <div class="run"><svg width="25" height="25" viewBox="0 0 25 25"><rect width="25" height="25" rx="5" fill="#0b0b0b"/><path d="m12.500 4 7 4v9l-7 4-7-4V8z" fill="#b5b5b5"/><path d="m5.500 8 14 0-7 13v-8z" fill="#eee"/><path d="m5.500 8 7 5v8l-7-4z" fill="#6e6e6e"/></svg></div>
    <div class="run"><svg width="30" height="30"><use href="#chrome"/></svg></div>
    <div class="run"><svg width="30" height="28" viewBox="0 0 30 28"><circle cx="16" cy="14" r="13.500" fill="#ed6c47"/><path d="M16 .5A13.500 13.500 0 0 1 29.500 14H16z" fill="#ff8f6b"/><path d="M29.500 14A13.500 13.500 0 0 1 2.500 14z" fill="#d35230"/><rect y="6" width="15" height="16" rx="1" fill="#c43e1c"/><text x="7.500" y="18.500" text-anchor="middle" font-family="Open Sans" font-weight="700" font-size="12" fill="#fff">P</text></svg></div>
    <div class="run cur"><svg width="30" height="30"><use href="#access"/></svg></div>
  </div>
  <div class="tray">
    <svg class="more" width="14" height="8" viewBox="0 0 14 8"><path d="m1 7 6-6 6 6" fill="none" stroke="#222" stroke-width="1.600"/></svg>
    <svg class="cloud" width="22" height="18" viewBox="0 0 22 18"><path d="M6 14q-5 0-5-4.500T6 5q2-4 6-4 5 0 6 5 3 1 3 4t-4 4z" fill="#bdbdbf" stroke="#222" stroke-width="1.500"/><path d="M4 1.500 19 17" stroke="#222" stroke-width="1.500"/></svg>
    <svg class="sync" width="22" height="22" viewBox="0 0 22 22"><path d="M2 9a9 8 0 0 1 17-3M19.500 1v5h-5M2 20v-5h4.500M2 15q2 4 7 5" fill="none" stroke="#222" stroke-width="1.500"/><circle cx="16" cy="16" r="5" fill="#fb9a0d"/></svg>
    <span class="lang">ع</span>
    <svg class="wifi" width="20" height="16" viewBox="0 0 20 16"><path d="M1 6a13 13 0 0 1 18 0M4 9a9 9 0 0 1 12 0M7 11.500a5 5 0 0 1 6 0" fill="none" stroke="#222" stroke-width="1.600"/><circle cx="10" cy="14" r="1.700" fill="#222"/></svg>
    <svg class="vol" width="20" height="16" viewBox="0 0 20 16"><path d="M1 5.500h3L8.500 1v14L4 10.500H1zM11 5q2 3 0 6" fill="none" stroke="#222" stroke-width="1.300"/><path d="M14 3q3.500 5 0 10M16.500 1q4.500 7 0 14" fill="none" stroke="#a5a5a8" stroke-width="1.300"/></svg>
    <svg class="bat" width="20" height="16" viewBox="0 0 20 16"><rect x="1" y="4" width="16" height="10.500" rx="2.500" fill="#ddd" stroke="#222" stroke-width="1.400"/><path d="M3 8 7 6h8.500v7H3z" fill="#222"/><path d="M18 7.500h2v4h-2z" fill="#222"/><path d="M4 0 0 6h3L2 10l5-6H4z" fill="#222"/></svg>
    <div class="clock"><span class="t" data-w="50">٠١:٥٤ ص</span><span class="t" data-w="52">٤٧/٠١/٢٥</span></div>
  </div>
</footer>
<script src="fit.js"></script>
</body>
</html>
```
FILE: styles.css
```css
* { box-sizing: border-box; }
body {
  margin: 0; width: 1917px; height: 1077px; overflow: hidden;
  display: flex; flex-direction: column;
  background: #e5e3e8; color: #262626;
  font: 14px/1 "DejaVu Sans Condensed", "DejaVu Sans", sans-serif;
}
svg { display: block; flex: none; direction: ltr; }
.defs { position: absolute; }
.t { display: inline-block; white-space: nowrap; flex: none; line-height: 1.3; }
.t > span { display: inline-block; transform-origin: right center; }
.dim { color: #a6a6a6; }

.titlebar {
  height: 60px; display: flex; align-items: center; padding-right: 18px;
  background: linear-gradient(90deg, #e4e4e5 0, #e6e3e8 14%, #e5e4eb 40%, #e5e4ea 60%, #e3e3e4 100%);
}
.save { margin-right: 20px; }
.redo { margin-right: 15px; }
.c1 { margin-right: 10px; }
.undo { margin-right: 10px; }
.c2 { margin-right: 10px; }
.c3 { margin-right: 14px; margin-top: 2px; }
.title { display: flex; font-size: 15px; margin-right: 18px; margin-top: 4px; }
.gap6 { margin-right: 6px; }
.gap9 { margin-right: 9px; }
.window { display: flex; align-items: center; gap: 46px; margin-right: auto; padding-left: 22px; }
.window svg:first-child { margin-left: -7px; }

.menu {
  height: 38px; display: flex; align-items: center; padding-right: 23px; font-size: 17px;
  background: linear-gradient(90deg, #e4e4e5 0, #e6e3e8 14%, #e5e4eb 40%, #e5e4ea 60%, #e3e3e4 100%);
}
.menu > .t { margin-top: 3px; }
.menu .on { font-weight: 700; border-bottom: 3px solid #a41e2f; margin: 0 29px 0 26px; padding: 4px 3px 0 0; height: 31px; }
.m36 { margin-right: 36px; }
.m43 { margin-right: 43px; }
.m41 { margin-right: 41px; }
.tell { margin-right: 48px; --sw: 3; --fo: 0; color: #444; }
.say { margin-right: 16px; color: #555; }

.ribbon {
  height: 124px; margin: 0 8px 0 9px; background: #fff; border-radius: 10px;
  display: flex; box-shadow: 0 1px 4px rgba(0,0,0,.3); position: relative; z-index: 2; flex: none;
}
.group { margin-top: 6px; height: 111px; border-left: 1px solid #d2d0ce; flex: none; }
.group .body { display: flex; height: 96px; margin-top: -2px; }
.group footer { display: flex; justify-content: center; align-items: center; height: 22px; font-size: 13px; position: relative; }
.lau { position: absolute; left: 4px; top: 6px; }
.g1 { width: 77px; } .g2 { width: 204px; } .g3 { width: 340px; } .g4 { width: 304px; } .g5 { width: 194px; } .g6 { width: 485px; }
.g1 footer { padding-right: 5px; }
.g2 footer { padding-left: 20px; }
.g6 footer { padding-left: 20px; }
.big { width: 68px; display: flex; flex-direction: column; align-items: center; padding-top: 6px; }
.big > svg:first-child { height: 38px; }
.big .t { margin-top: 6px; }
.big .below { margin-top: 3px; }
.big.two .t { margin-top: 3px; }
.big.two .t + .t { margin-top: 2px; }
.pair { display: flex; align-items: center; gap: 6px; }
.pair .t, .big.two .pair .t { margin-top: 2px; }
.g1 .big { width: 71px; margin-right: 6px; }
.g1 .big > svg:first-child, .g3 .big > svg:first-child { height: 36px; margin-bottom: 2px; }
.g3 .big { padding-right: 4px; }
.g4 .big { width: 66px; margin-left: 3px; padding-right: 2px; }
.g5 .big { width: 70px; padding-right: 2px; }
.g5 .big .t { margin-top: 2px; }
.g2 .col, .g3 .sort { margin-right: 1px; }
.col { display: flex; flex-direction: column; }
.sort { width: 102px; }
.rec { width: 105px; }
.cmd { height: 32px; display: flex; align-items: center; }
.cmd .t { margin-right: 5px; }
.cmd .c { margin-right: 6px; }
.cmd .far { margin-right: 24px; }
.g6 .body { flex-direction: column; padding: 6px 10px 0 0; }
.line { display: grid; align-items: center; justify-items: center; height: 40px; justify-content: start; }
.line.one { grid-template-columns: 200px 81px 31px 32px 6px 29px 31px 6px 30px 22px; height: 37px; }
.line.two { margin-right: -2px; grid-template-columns: 34px 32px 30px 6px 28px 24px 26px 26px 26px 24px 4px 28px 36px 31px 6px 29px 16px 9px 27px 26px; height: 43px; }
.combo { width: 199px; height: 30px; border: 1px solid #dcdcdc; border-radius: 5px; background: #f0f0f0; display: flex; justify-content: flex-end; align-items: center; }
.combo + .combo { width: 79px; }
.sep { width: 1px; height: 30px; background: #d0d0d0; }
.let { font: 17px "Open Sans", sans-serif; }
b.let { font-weight: 700; }
em.let { font: italic 17px "Liberation Serif", serif; }
.collapse { margin: 102px auto 0 11px; color: #222; }

.work { height: 772px; display: flex; flex-direction: row-reverse; background: #fff; border-bottom: 1px solid #fff; flex: none; }
.docs { width: 1678px; border-right: 1px solid #5c5c5c; }
.tabs { display: flex; height: 30px; background: #efefef; }
.tab { border-left: 1px solid #cfcfcf; border-bottom: 1px solid #cfcfcf; display: flex; align-items: center; padding: 2px 8px 0 8px; font-size: 13px; flex: none; }
.tab .t { margin: 2px 10px 0 0; }
.tab .x { margin-right: auto; color: #222; }
.active { background: #fff; border-top: 4px solid #a41e2f; border-bottom: 0; padding: 0 8px 2px; font-weight: 700; }
.rest { flex: 1; border-left: 0; }
.w115 { width: 115px; } .w117 { width: 117px; } .w121 { width: 121px; } .w134 { width: 134px; } .w135 { width: 135px; }

.report { width: 934px; margin: 29px auto 0 29px; font-family: "Liberation Sans", "DejaVu Sans", sans-serif; color: #404040; }
.band { height: 60px; background: #d5dce6; display: flex; padding-right: 41px; color: #44546a; }
.band > svg { margin-top: 16px; }
h1 { margin: 4px 18px 0 0; font-size: 25px; font-weight: 400; }
.stamp { margin: 8px auto 0 28px; width: 91px; font-size: 14px; display: flex; flex-direction: column; gap: 11px; }
.stamp .t + .t { margin-right: 17px; }
.row { display: grid; grid-template-columns: 121px 283px 121px 121px; column-gap: 5px; padding-right: 3px; height: 34px; align-items: start; font-size: 18px; }
.row > span { padding-right: 6px; }
.head { font-size: 13.5px; color: #666; height: 36px; padding-top: 6px; align-items: center; }
.rule { height: 2px; width: 667px; background: #a6a6a6; margin-bottom: -2px; }
.data > span { height: 29px; border: 1px solid #a6a6a6; display: flex; align-items: center; margin-top: 3px; padding-right: 6px; }
.alt { background: #f1f1f1; }
.data .name { padding-right: 5px; }
.name .t { font-size: 13.5px; margin-top: 3px; }
.name bdi { margin-right: 5px; }
.name .wide { margin-right: 10px; }
.cash .t { font-size: 14px; margin-right: 21px; }
.sum { width: 127px; margin: 9px 414px 0 0; border-top: 3px solid #a6a6a6; }
.total { width: 121px; margin: 1px 3px 0 0; height: 21px; border: 1px solid #a6a6a6; overflow: hidden; }
.total .t { margin: 3px 27px 0 0; }
.page { font-size: 14px; margin: 7px 12px 0 0; }

.nav { width: 239px; background: #efefef; border-left: 5px solid #d0d0d0; }
.top { height: 40px; display: flex; align-items: center; padding-right: 11px; font-size: 27px; }
.circ { margin-right: 13px; margin-top: -6px; }
.fold { margin-right: 18px; margin-top: -6px; }
.top .t { margin-top: -3px; }
.find { height: 30px; margin: 0 3px 0 5px; background: #fff; border: 1px solid #8a8a8a; display: flex; align-items: center; justify-content: space-between; padding: 0 7px 0 5px; --sw: 3; color: #333; }
.cat { height: 24px; display: flex; align-items: center; justify-content: space-between; padding: 0 14px 0 19px; font-weight: 700; font-size: 15px; }
.cat.first { height: 28px; padding-top: 4px; }
.cat.second { height: 25px; }
.cat .t { margin-top: 3px; }
.obj { height: 30px; margin: 0 3px 0 5px; display: flex; align-items: center; padding-right: 19px; border: 1px solid transparent; font-size: 15px; }
.obj svg { margin-top: -2px; }
.obj .t { margin-right: 8px; margin-top: 2px; }
.sel { background: #fff; border-color: #555; }

.status { height: 27px; background: #f4f4f4; border-bottom: 1px solid #a8a8ac; display: flex; align-items: center; padding-right: 13px; font-size: 13px; flex: none; }
.num { margin-right: auto; margin-left: 22px; font-family: "Open Sans", sans-serif; }
.view { width: 50px; height: 26px; display: grid; place-items: center; color: #222; }
.view.on { background: #e0e0e0; }

.taskbar { height: 56px; flex: none; display: flex; align-items: center; padding-right: 226px; background: linear-gradient(90deg, #dcdce0 0, #dbdbde 20%, #d9dadc 50%, #dfd8e6 63%, #dfd8e6 71%, #dadae3 80%, #d7d8dc 92%, #d9d8df 100%); }
.start { margin-top: 2px; }
.pill { width: 273px; height: 39px; margin: 2px 18px 0 0; border-radius: 20px; background: #f5f3f9; border: 1px solid #c6c2d0; display: flex; align-items: center; padding: 0 12px 0 6px; font-size: 16px; color: #555; flex: none; }
.pill .t { margin-right: 13px; }
.pic { margin-right: auto; }
.apps { display: flex; gap: 7.050px; margin-right: 7px; margin-top: 2px; }
.apps > div { width: 48px; height: 48px; display: grid; place-items: center; border-radius: 5px; position: relative; }
.run::after { content: ""; position: absolute; bottom: 0; left: 20px; width: 8px; height: 4px; border-radius: 2px; background: #777; }
.cur { background: #efeff2; box-shadow: 0 0 2px #aaa; }
.cur::after { left: 14px; width: 20px; background: #0078d4; }
.tray { display: flex; align-items: center; margin-right: auto; padding-left: 22px; }
.more { margin-left: 2px; }
.cloud { margin-right: 23px; }
.sync { margin-right: 19px; }
.lang { margin-right: 32px; font-size: 15px; width: 9px; margin-top: 8px; }
.wifi { margin-right: 33px; }
.vol { margin-right: 10px; }
.bat { margin-right: 10px; }
.clock { display: flex; flex-direction: column; width: 52px; margin-right: 22px; font-size: 14px; gap: 2px; }
```
FILE: fit.js
```js
// Condense or widen each label so that it fills its allotted width.
for (const el of document.querySelectorAll(".t[data-w]")) {
  const inner = document.createElement("span");
  while (el.firstChild) inner.appendChild(el.firstChild);
  el.appendChild(inner);
  const want = Number(el.dataset.w);
  const have = inner.getBoundingClientRect().width;
  el.style.width = want + "px";
  inner.style.transformOrigin = getComputedStyle(el).direction === "ltr" ? "left" : "right";
  inner.style.transform = `scaleX(${want / have})`;
}
```
